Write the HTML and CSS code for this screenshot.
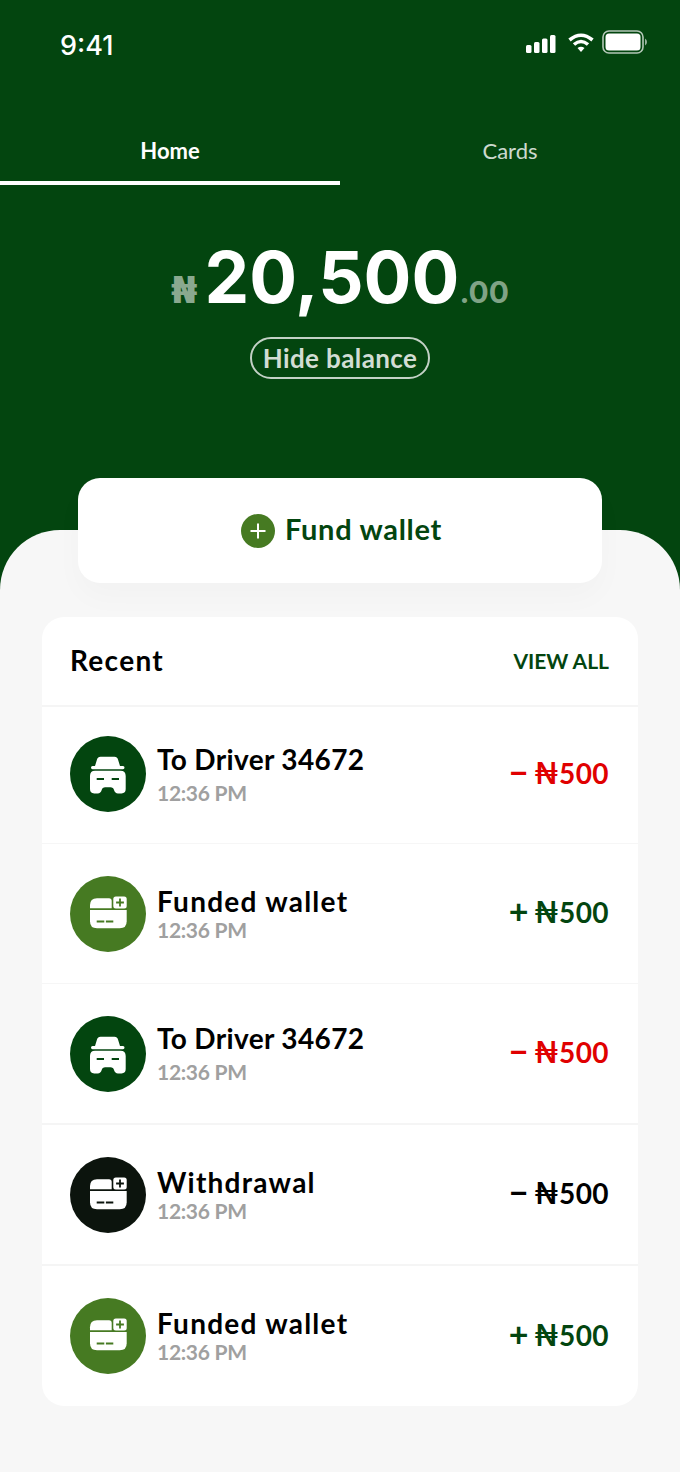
FILE: index.html
```html
<!DOCTYPE html>
<html lang="en">
<head>
    <meta charset="UTF-8">
    <meta name="viewport" content="width=device-width, initial-scale=1.0">
    <title>Wallet</title>
    <link rel="stylesheet" href="styles.css">
</head>
<body>
    <svg class="sprites" width="0" height="0">
        <symbol id="icon-driver" viewBox="0 0 76 76">
            <path d="M25 30 L27 23.5 Q27.8 20.7 30.5 20.7 H44.5 Q47.2 20.7 48 23.5 L50 30 H53 Q54.5 30 54.5 31.6 Q54.5 33.3 53 33.3 H22.5 Q21 33.3 21 31.6 Q21 30 22.5 30 Z" fill="#fff"/>
            <path d="M25 34.8 H50.5 Q55.7 34.8 55.7 40 V53 Q55.7 57.4 51.5 57.4 H48 Q45 57.4 44 54 Q43.3 51.2 40.5 51.2 H35.2 Q32.4 51.2 31.7 54 Q30.7 57.4 27.7 57.4 H24.2 Q20 57.4 20 53 V40 Q20 34.8 25 34.8 Z" fill="#fff"/>
            <path d="M26.7 43 H34 M41.7 43 H49" stroke="currentColor" stroke-width="2" fill="none"/>
        </symbol>
        <symbol id="icon-wallet" viewBox="0 0 76 76">
            <path d="M27 22.3 H39 Q41.7 22.3 41.7 25 V32.3 H20 V29.3 Q20 22.3 27 22.3 Z" fill="#fff"/>
            <rect x="43.3" y="20.5" width="13.4" height="12" rx="2.5" fill="#fff"/>
            <path d="M50 22.6 V30.4 M46.1 26.5 H53.9" stroke="currentColor" stroke-width="1.8" fill="none"/>
            <path d="M20 34 H56.7 V45.3 Q56.7 52.3 49.7 52.3 H27 Q20 52.3 20 45.3 Z" fill="#fff"/>
            <path d="M26.7 45.5 H34.3 M35.9 45.5 H43.3" stroke="currentColor" stroke-width="2" fill="none"/>
        </symbol>
    </svg>

    <header class="hero">
        <div class="status-bar">
            <span class="clock">9:41</span>
            <div class="status-icons">
                <svg class="signal" width="30" height="18" viewBox="0 0 30 18" fill="#fff">
                    <rect x="0" y="10" width="5.5" height="8" rx="1.5"/>
                    <rect x="8" y="7" width="5.5" height="11" rx="1.5"/>
                    <rect x="16" y="3.5" width="5.5" height="14.5" rx="1.5"/>
                    <rect x="24" y="0" width="5.5" height="18" rx="1.5"/>
                </svg>
                <svg class="wifi" width="26" height="19" viewBox="0 0 26 19" fill="none" stroke="#fff" stroke-width="3.6">
                    <path d="M1.5 7 Q13 -2.5 24.5 7"/>
                    <path d="M6 11.5 Q13 5.5 20 11.5"/>
                    <path d="M9.5 15 L13 19 L16.5 15 Q13 12.5 9.5 15 Z" fill="#fff" stroke="none"/>
                </svg>
                <svg width="45" height="24" viewBox="0 0 45 24">
                    <rect x="1" y="1" width="40" height="22" rx="6" fill="none" stroke="#fff" stroke-opacity="0.7" stroke-width="1.6"/>
                    <rect x="3.5" y="3.5" width="35" height="17" rx="3.5" fill="#fff"/>
                    <path d="M43 8.5 Q45 9.5 45 12 Q45 14.5 43 15.5 Z" fill="#fff" fill-opacity="0.6"/>
                </svg>
            </div>
        </div>

        <nav class="tabs">
            <a class="tab tab-active">Home</a>
            <a class="tab">Cards</a>
        </nav>

        <div class="balance">
            <span class="balance-cur">₦</span>
            <span class="balance-main">20,500</span>
            <span class="balance-dec">.00</span>
        </div>
        <div class="hide-wrap">
            <button class="hide-btn">Hide balance</button>
        </div>
    </header>

    <main class="sheet">
        <button class="fund-card">
            <span class="fund-plus">
                <svg width="18" height="18" viewBox="0 0 18 18" stroke="#fff" stroke-width="2"><path d="M9 1.5 V16.5 M1.5 9 H16.5"/></svg>
            </span>
            <span class="fund-label">Fund wallet</span>
        </button>

        <section class="recent">
            <div class="recent-head">
                <h2>Recent</h2>
                <a class="view-all">VIEW ALL</a>
            </div>

            <div class="txn txn-first">
                <span class="txn-icon bg-dark"><svg><use href="#icon-driver"/></svg></span>
                <div class="txn-text txn-text-loose">
                    <div class="txn-title">To Driver 34672</div>
                    <div class="txn-time">12:36 PM</div>
                </div>
                <div class="txn-amount red"><span class="amt-sign">−</span><span class="amt-cur">₦</span>500</div>
            </div>

            <div class="txn">
                <span class="txn-icon bg-light"><svg><use href="#icon-wallet"/></svg></span>
                <div class="txn-text">
                    <div class="txn-title txn-title-wide">Funded wallet</div>
                    <div class="txn-time">12:36 PM</div>
                </div>
                <div class="txn-amount green"><span class="amt-sign">+</span><span class="amt-cur">₦</span>500</div>
            </div>

            <div class="txn">
                <span class="txn-icon bg-dark"><svg><use href="#icon-driver"/></svg></span>
                <div class="txn-text txn-text-loose">
                    <div class="txn-title">To Driver 34672</div>
                    <div class="txn-time">12:36 PM</div>
                </div>
                <div class="txn-amount red"><span class="amt-sign">−</span><span class="amt-cur">₦</span>500</div>
            </div>

            <div class="txn txn-thick">
                <span class="txn-icon bg-black"><svg><use href="#icon-wallet"/></svg></span>
                <div class="txn-text">
                    <div class="txn-title txn-title-wide">Withdrawal</div>
                    <div class="txn-time">12:36 PM</div>
                </div>
                <div class="txn-amount"><span class="amt-sign">−</span><span class="amt-cur">₦</span>500</div>
            </div>

            <div class="txn txn-thick txn-last">
                <span class="txn-icon bg-light"><svg><use href="#icon-wallet"/></svg></span>
                <div class="txn-text">
                    <div class="txn-title txn-title-wide">Funded wallet</div>
                    <div class="txn-time">12:36 PM</div>
                </div>
                <div class="txn-amount green"><span class="amt-sign">+</span><span class="amt-cur">₦</span>500</div>
            </div>
        </section>
    </main>
</body>
</html>
```
FILE: styles.css
```css
body {
    margin: 0;
    width: 680px;
    height: 1472px;
    overflow: hidden;
    background-color: #03450f;
    font-family: Lato, "DejaVu Sans", sans-serif;
    color: #000;
}

.sprites {
    display: block;
    height: 0;
}

.hero {
    height: 530px;
    color: #fff;
    box-sizing: border-box;
    padding-top: 30px;
}

.status-bar {
    display: flex;
    justify-content: space-between;
    align-items: flex-start;
    padding: 0 33px 0 60px;
    height: 79px;
}

.clock {
    font-family: Inter, sans-serif;
    font-weight: 500;
    font-size: 27px;
    line-height: 31px;
}

.status-icons {
    display: flex;
    gap: 12px;
    align-items: center;
}

.signal {
    margin-top: 3px;
}

.wifi {
    margin-right: -4px;
}

.tabs {
    display: flex;
}

.tab {
    flex: 1;
    text-align: center;
    font-size: 22px;
    line-height: 26px;
    padding: 29px 0 0;
    height: 43px;
    opacity: 0.8;
}

.tab-active {
    font-weight: 700;
    opacity: 1;
    border-bottom: 4px solid #fff;
}

.balance {
    display: flex;
    justify-content: center;
    align-items: baseline;
    gap: 7px;
    margin-top: 48px;
    height: 88px;
    font-family: Inter, sans-serif;
    line-height: 88px;
}

.balance-cur {
    font-family: "DejaVu Sans", sans-serif;
    font-size: 38px;
    font-weight: 700;
    color: #8aa98f;
}

.balance-main {
    font-size: 71px;
    font-weight: 700;
}

.balance-dec {
    font-size: 30px;
    font-weight: 700;
    color: #80a386;
    margin-left: -7px;
}

.hide-wrap {
    display: flex;
    justify-content: center;
    margin-top: 16px;
}

.hide-btn {
    width: 180px;
    height: 42px;
    padding: 0;
    background: none;
    border: 2px solid #c3d1c6;
    border-radius: 21px;
    color: #d2ddd4;
    font-family: Lato, sans-serif;
    font-size: 26px;
    font-weight: 700;
    letter-spacing: 0.4px;
}

.sheet {
    height: 942px;
    background-color: #f7f7f7;
    border-radius: 60px 60px 0 0;
    padding: 0 42px;
    box-sizing: border-box;
}

.fund-card {
    display: flex;
    justify-content: center;
    align-items: center;
    gap: 10px;
    width: 524px;
    height: 105px;
    padding: 0 0 0 3px;
    margin: 0 auto;
    position: relative;
    top: -52px;
    background-color: #fff;
    border: none;
    border-radius: 22px;
    box-shadow: 0 14px 30px rgba(0, 0, 0, 0.025);
    color: #03450f;
    font-family: Lato, sans-serif;
    font-size: 29px;
    font-weight: 700;
}

.fund-label {
    letter-spacing: 0.7px;
    padding-bottom: 4px;
}

.fund-plus {
    display: flex;
    justify-content: center;
    align-items: center;
    width: 34px;
    height: 34px;
    border-radius: 50%;
    background-color: #467a22;
}

.recent {
    margin-top: -18px;
    background-color: #fff;
    border-radius: 22px;
    overflow: hidden;
}

.recent-head {
    display: flex;
    justify-content: space-between;
    align-items: center;
    height: 86px;
    padding: 0 29px 2px 28px;
    border-bottom: 2px solid #f5f5f5;
}

.recent-head h2 {
    margin: 0;
    font-size: 28px;
    font-weight: 700;
    letter-spacing: 1.3px;
}

.view-all {
    color: #03450f;
    font-size: 21px;
    font-weight: 700;
}

.txn {
    display: flex;
    align-items: center;
    height: 139px;
    padding: 0 29px 0 28px;
    border-top: 1px solid #f6f6f6;
}

.txn-first {
    height: 134px;
    padding-bottom: 2px;
    border-top: none;
}

.txn-thick {
    height: 139px;
    border-top: 2px solid #f5f5f5;
}

.txn-last {
    height: 140px;
}

.txn-icon {
    flex: none;
    width: 76px;
    height: 76px;
    border-radius: 50%;
}

.txn-icon svg {
    display: block;
    width: 76px;
    height: 76px;
}

/* icon cutouts use currentColor, so it matches the disc */
.bg-dark {
    background-color: #03450f;
    color: #03450f;
}

.bg-light {
    background-color: #467a22;
    color: #467a22;
}

.bg-black {
    background-color: #0c140d;
    color: #0c140d;
}

.txn-text {
    flex: 1;
    margin-left: 11px;
}

.txn-title {
    font-size: 28px;
    font-weight: 700;
    line-height: 32px;
    letter-spacing: 0.35px;
}

.txn-title-wide {
    letter-spacing: 1.25px;
}

.txn-time {
    font-size: 21px;
    font-weight: 700;
    line-height: 26px;
    letter-spacing: -0.3px;
    color: #a0a0a0;
}

.txn-text-loose .txn-time {
    margin-top: 5px;
}

.txn-amount {
    font-size: 28px;
    font-weight: 700;
    line-height: 34px;
    letter-spacing: 0.4px;
    padding-bottom: 3px;
}

.amt-sign {
    font-size: 34px;
    line-height: 0;
    margin-right: 5px;
    vertical-align: -1px;
}

.amt-cur {
    font-size: 31px;
    line-height: 0;
}

.red {
    color: #e00000;
}

.green {
    color: #03450f;
}
```
